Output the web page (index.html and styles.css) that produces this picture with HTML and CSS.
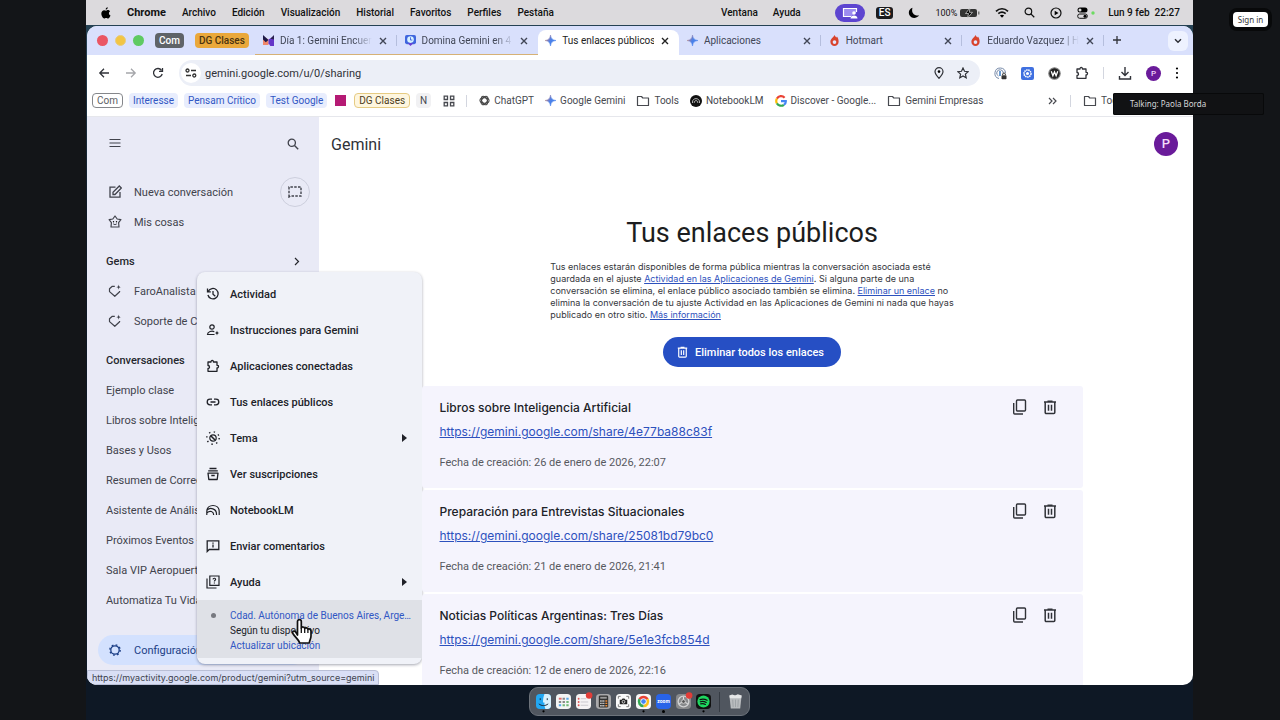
FILE: index.html
```
<!DOCTYPE html>
<html lang="es">
    <head>
        <meta charset="UTF-8" />
        <title>Tus enlaces públicos - Gemini</title>
        <link rel="stylesheet" href="styles.css">
    </head>
    <body>
        <!-- Icons shared by the whole page -->
        <svg class="sprite" aria-hidden="true">
            <symbol id="close" viewBox="0 0 10 10"><path d="M2 2l6 6M8 2l-6 6" stroke="currentColor" stroke-width="1.4" /></symbol>
            <linearGradient id="sparkFill" x1="0" y1="0.2" x2="1" y2="0.8">
                <stop offset="0" stop-color="#e8a04a" /><stop offset=".25" stop-color="#8f7fb0" /><stop offset=".5" stop-color="#4a80e8" /><stop offset="1" stop-color="#4a86f0" />
            </linearGradient>
            <symbol id="spark" viewBox="0 0 12 12"><path d="M6 0C6.6 4 8 5.4 12 6 8 6.6 6.6 8 6 12 5.4 8 4 6.6 0 6 4 5.4 5.4 4 6 0z" fill="url(#sparkFill)" stroke="url(#sparkFill)" stroke-width=".6" /></symbol>
            <symbol id="flame" viewBox="0 0 12 12"><path d="M6 0c.8 1.2 1.2 2 2 2.700 .4-.3.600-.7.700-1C10 3.300 10.500 5.200 10.500 7.300 10.500 10 8.500 12 6 12S1.500 10 1.500 7.300C1.500 5 3 3.700 4 2.700 5 1.700 5.700 1 6 0z" fill="#d8432c" /><circle cx="6" cy="7.700" r="2" fill="#e1e6fc" /></symbol>
            <symbol id="folder" viewBox="0 0 14 12"><path d="M1.500 10.500v-9h4l1.300 1.500h5.700v7.500z" fill="none" stroke="currentColor" stroke-width="1.200" stroke-linejoin="round" /></symbol>
            <symbol id="puzzle" viewBox="0 0 14 14"><path d="M2 3h3c-.3-2 2.800-2 2.500 0H11v3.300c2-.3 2 2.700 0 2.500V12.300H2V9.500c2 .1 2-3 0-3z" fill="none" stroke="currentColor" stroke-width="1.300" stroke-linejoin="round" /></symbol>
            <symbol id="search" viewBox="0 0 12 12"><circle cx="4.800" cy="4.800" r="3.600" fill="none" stroke="currentColor" stroke-width="1.300" /><path d="M7.500 7.500L11.200 11.200" stroke="currentColor" stroke-width="1.400" /></symbol>
            <symbol id="gem" viewBox="0 0 14 14"><path d="M6.800 2.300H4.300L1.500 4.800v2.800L6.800 12.300l4.800-4.500V7" fill="none" stroke="currentColor" stroke-width="1.200" stroke-linejoin="round" /><path d="M10.600.4c.3 1.900.8 2.400 2.700 2.700-1.900.3-2.400.8-2.700 2.700-.3-1.900-.8-2.400-2.700-2.700 1.900-.3 2.400-.8 2.700-2.700z" fill="currentColor" /></symbol>
            <symbol id="copy" viewBox="0 0 16 16"><rect x="4.500" y="1" width="9" height="11" rx="1" fill="none" stroke="currentColor" stroke-width="1.400" /><path d="M1.700 4v10a1 1 0 0 0 1 1H11" fill="none" stroke="currentColor" stroke-width="1.400" /></symbol>
            <symbol id="trash" viewBox="0 0 16 16"><path d="M2 3h12M5.500 2.200h5M3.200 3v10.500a1 1 0 0 0 1 1h7.600a1 1 0 0 0 1-1V3M6.500 5.700v6M9.500 5.700v6" fill="none" stroke="currentColor" stroke-width="1.500" /></symbol>
            <symbol id="arrow" viewBox="0 0 6 8"><path d="M1 0l5 4-5 4z" fill="currentColor" /></symbol>
        </svg>

        <div class="share">
            <!-- macOS menu bar -->
            <header class="menubar">
                <svg class="apple" viewBox="0 0 12 14"><path d="M8.100 0c.1 1.500-1.200 2.900-2.500 2.900C5.400 1.500 6.700.2 8.100 0zM8.300 3.500c.8 0 1.900.4 2.600 1.400-2.100 1.300-1.800 4.200.5 5.100-.6 1.600-1.700 3.500-2.900 3.500-.9 0-1.200-.6-2.300-.6s-1.500.6-2.300.6C2.200 13.500.4 10.500.4 7.700c0-2.600 1.600-4.100 3.300-4.100 1 0 1.800.7 2.500.7.600 0 1.300-.8 2.100-.8z" /></svg>
                <b>Chrome</b>
                <span>Archivo</span>
                <span>Edición</span>
                <span>Visualización</span>
                <span>Historial</span>
                <span>Favoritos</span>
                <span>Perfiles</span>
                <span>Pestaña</span>
                <div class="menubar-right">
                    <span>Ventana</span>
                    <span>Ayuda</span>
                    <span class="share-pill"><svg width="16" height="12" viewBox="0 0 16 12"><path d="M9 9.500H1.500v-8h13V5" fill="#9d8cf0" stroke="#fff" stroke-width="1.200" /><circle cx="12" cy="6" r="1.800" fill="#fff" /><path d="M8.500 11.500c0-4 7-4 7 0z" fill="#fff" /></svg></span>
                    <span class="lang">ES</span>
                    <svg width="12" height="12" viewBox="0 0 12 12"><path d="M4.500.8C1 2 0 5.500 1.500 8.300s6.300 4 9.700.2C6 9 3 5.500 4.500.8z" /></svg>
                    <span class="battery">100%
                        <svg width="20" height="10" viewBox="0 0 20 10"><rect y="1" width="17" height="8" rx="2" fill="#333" /><rect x="18" y="3.500" width="1.500" height="3" fill="#777" /><path d="M10 0L5.500 5.500h3L7.500 10 12.500 4.300h-3.200z" stroke="#ddd" stroke-width=".7" /></svg>
                    </span>
                    <svg width="14" height="11" viewBox="0 0 14 11"><path d="M1 4.300c3.500-3.400 8.500-3.400 12 0M3.300 6.700c2.200-2 5.200-2 7.400 0" fill="none" stroke="#111" stroke-width="1.700" /><path d="M7 10.700L4.900 8.500c1.200-1 3-1 4.200 0z" /></svg>
                    <svg width="11" height="11"><use href="#search" /></svg>
                    <svg width="12" height="12" viewBox="0 0 12 12"><circle cx="6" cy="6" r="5" fill="none" stroke="#111" stroke-width="1.200" /><path d="M4.700 3.700v4.600L8.500 6z" /></svg>
                    <svg class="controls" width="18" height="12" viewBox="0 0 18 12"><rect x=".5" y=".5" width="10" height="5" rx="2.500" /><circle cx="3" cy="3" r="1.500" fill="#ddd" /><rect x=".7" y="7" width="9.600" height="4.300" rx="2" fill="none" stroke="#111" /><circle cx="8" cy="9.200" r="1.500" /><circle cx="16" cy="6" r="1.700" fill="#6edb62" /></svg>
                    <span>Lun 9 feb &nbsp;22:27</span>
                </div>
            </header>

            <div class="window">
                <!-- Tab strip -->
                <nav class="tabs">
                    <div class="lights"><i class="red"></i><i class="yellow"></i><i class="green"></i></div>
                    <button class="group gray">Com</button>
                    <button class="group orange">DG Clases</button>
                    <div class="tab-list">
                        <div class="tab grouped">
                            <svg class="fav" viewBox="0 0 12 12"><path d="M0 1l6 4v6H0z" fill="#f0876a" /><path d="M0 0l6 5.500L3 8 0 5z" fill="#1d1b49" /><path d="M6 5l6-4v11H8L6 9z" fill="#6536c8" /><path d="M8 4l4-4v5z" fill="#2a214f" /></svg>
                            <span class="fade">Día 1: Gemini Encuentro</span><button aria-label="Cerrar"><svg><use href="#close" /></svg></button>
                        </div>
                        <div class="tab grouped">
                            <svg class="fav" viewBox="0 0 12 12"><rect width="12" height="10" rx="2" fill="#3f66de" /><circle cx="6" cy="5" r="3.600" fill="#d6f1ff" /><path d="M6 2.500V5.500h2" stroke="#3f66de" fill="none" /><path d="M3 9h6l-3 3z" fill="#6c3bd4" /></svg>
                            <span class="fade">Domina Gemini en 4 días</span><button aria-label="Cerrar"><svg><use href="#close" /></svg></button>
                        </div>
                        <div class="tab active"><svg class="fav"><use href="#spark" /></svg><span>Tus enlaces públicos</span><button aria-label="Cerrar"><svg><use href="#close" /></svg></button></div>
                        <div class="tab"><svg class="fav"><use href="#spark" /></svg><span>Aplicaciones</span><button aria-label="Cerrar"><svg><use href="#close" /></svg></button></div>
                        <div class="tab"><svg class="fav"><use href="#flame" /></svg><span>Hotmart</span><button aria-label="Cerrar"><svg><use href="#close" /></svg></button></div>
                        <div class="tab"><svg class="fav"><use href="#flame" /></svg><span class="fade">Eduardo Vazquez | Hotmart</span><button aria-label="Cerrar"><svg><use href="#close" /></svg></button></div>
                    </div>
                    <button class="new-tab" aria-label="Nueva pestaña"><svg width="10" height="10" viewBox="0 0 10 10"><path d="M5 1v8M1 5h8" stroke="currentColor" stroke-width="1.300" /></svg></button>
                    <button class="tab-menu" aria-label="Buscar pestañas"><svg width="8" height="6" viewBox="0 0 8 6"><path d="M1 1.300l3 3 3-3" fill="none" stroke="currentColor" stroke-width="1.500" /></svg></button>
                </nav>

                <!-- Toolbar -->
                <div class="toolbar">
                    <button aria-label="Atrás"><svg width="12" height="12" viewBox="0 0 12 12"><path d="M11 6H2M6 1.800L1.800 6 6 10.200" fill="none" stroke="currentColor" stroke-width="1.300" /></svg></button>
                    <button class="off" aria-label="Adelante"><svg width="12" height="12" viewBox="0 0 12 12"><path d="M1 6h9M6 1.800L10.200 6 6 10.200" fill="none" stroke="currentColor" stroke-width="1.300" /></svg></button>
                    <button aria-label="Recargar"><svg width="12" height="12" viewBox="0 0 12 12"><path d="M10.200 7A4.400 4.400 0 1 1 9.500 3.300M10.500 1v3.400H7" fill="none" stroke="currentColor" stroke-width="1.300" /></svg></button>
                    <div class="omnibox">
                        <span class="site"><svg width="12" height="10" viewBox="0 0 12 10"><g fill="none" stroke="#333" stroke-width="1.300"><circle cx="2.500" cy="2.500" r="1.500" /><path d="M6 2.500h5M1 7.500h5" /><circle cx="9.300" cy="7.500" r="1.500" /></g></svg></span>
                        <input type="text" aria-label="Dirección" value="gemini.google.com/u/0/sharing" />
                        <svg width="12" height="12" viewBox="0 0 12 12"><path d="M6 11.300C3.500 8.500 2 6.600 2 4.700a4 4 0 0 1 8 0c0 1.900-1.500 3.800-4 6.600z" fill="none" stroke="currentColor" stroke-width="1.200" /><circle cx="6" cy="4.600" r="1.300" /></svg>
                        <svg width="12" height="12" viewBox="0 0 12 12"><path d="M6 1l1.500 3.300 3.600.4-2.700 2.400.8 3.600L6 8.900l-3.200 1.800.8-3.600L.9 4.700l3.600-.4z" fill="none" stroke="currentColor" stroke-width="1.200" /></svg>
                    </div>
                    <svg width="13" height="13" viewBox="0 0 13 13"><g fill="none" stroke="#7689a8"><path d="M5 11.500A5.300 5.300 0 1 1 11.500 6" /><path d="M4.500 9A3.300 3.300 0 1 1 9.300 6" /></g><path d="M6 4v5" stroke="#3979c0" stroke-width="1.500" /><rect x="7.500" y="8.300" width="5" height="4" rx=".7" fill="#333" /><path d="M8.700 8V7c0-1.300 2.600-1.300 2.600 0v1" fill="none" stroke="#333" /></svg>
                    <svg width="13" height="13" viewBox="0 0 13 13"><rect width="13" height="13" rx="2" fill="#4070e0" /><circle cx="6.500" cy="6.500" r="3.500" fill="none" stroke="#fff" stroke-width="1.500" stroke-dasharray="1.500 .6" /><circle cx="6.500" cy="6.500" r="1.500" fill="#fff" /></svg>
                    <svg width="13" height="13" viewBox="0 0 12 12"><circle cx="6" cy="6" r="5.300" fill="#222" stroke="#888" /><path d="M3 4l1.500 4L6 4.500 7.500 8 9 4" fill="none" stroke="#fff" stroke-width="1.200" /></svg>
                    <svg width="14" height="14"><use href="#puzzle" /></svg>
                    <i class="sep"></i>
                    <svg width="14" height="13" viewBox="0 0 14 13"><path d="M7 0v8M3.500 5L7 8.500 10.500 5M1.500 9v3h11V9" fill="none" stroke="currentColor" stroke-width="1.400" /></svg>
                    <span class="avatar small">P</span>
                    <svg class="dots" width="4" height="12" viewBox="0 0 4 12"><circle cx="2" cy="1.500" r="1.100" /><circle cx="2" cy="6" r="1.100" /><circle cx="2" cy="10.500" r="1.100" /></svg>
                </div>

                <!-- Bookmarks -->
                <div class="bookmarks">
                    <button class="chip outline">Com</button>
                    <button class="chip blue">Interesse</button>
                    <button class="chip blue">Pensam Crítico</button>
                    <button class="chip blue">Test Google</button>
                    <button class="square" aria-label="Grupo"></button>
                    <button class="chip yellow">DG Clases</button>
                    <button class="chip light">N</button>
                    <svg class="apps" width="12" height="12" viewBox="0 0 12 12"><path d="M1.200 1.200h3.300v3.300H1.200zM7.500 1.200h3.300v3.300H7.500zM1.200 7.500h3.300v3.300H1.200zM7.500 7.500h3.300v3.300H7.500z" fill="none" stroke="currentColor" stroke-width="1.300" /></svg>
                    <i class="sep"></i>
                    <a href="#"><svg width="11" height="11" viewBox="0 0 12 12"><g fill="none" stroke="#444" stroke-width="1.100"><ellipse cx="6" cy="6" rx="5" ry="3" /><ellipse cx="6" cy="6" rx="5" ry="3" transform="rotate(60 6 6)" /><ellipse cx="6" cy="6" rx="5" ry="3" transform="rotate(120 6 6)" /></g></svg>ChatGPT</a>
                    <a href="#"><svg width="11" height="11"><use href="#spark" /></svg>Google Gemini</a>
                    <a href="#"><svg width="14" height="12"><use href="#folder" /></svg>Tools</a>
                    <a href="#"><svg width="12" height="12" viewBox="0 0 12 12"><circle cx="6" cy="6" r="6" fill="#111" /><path d="M2.500 8V7c0-4.500 7-4.500 7 0v1M4.300 8V7.500c0-2.500 3.400-2.500 3.400 0V8" fill="none" stroke="#ddd" stroke-width=".8" /></svg>NotebookLM</a>
                    <a href="#"><svg width="12" height="12" viewBox="0 0 12 12"><g fill="none" stroke-width="2.200"><path d="M9.600 2.700A4.800 4.800 0 0 0 1.900 3.600" stroke="#ea4335" /><path d="M1.900 3.600a4.800 4.800 0 0 0 0 4.800" stroke="#fbbc05" /><path d="M1.900 8.400a4.800 4.800 0 0 0 7 1.400" stroke="#34a853" /><path d="M8.900 9.800C10.200 9 10.900 7.600 10.800 6.100H6" stroke="#4285f4" /></g></svg>Discover - Google...</a>
                    <a href="#"><svg width="14" height="12"><use href="#folder" /></svg>Gemini Empresas</a>
                    <svg class="more" width="9" height="8" viewBox="0 0 9 8"><path d="M1 1l3 3-3 3M5 1l3 3-3 3" fill="none" stroke="currentColor" stroke-width="1.200" /></svg>
                    <i class="sep"></i>
                    <a class="last" href="#"><svg width="14" height="12"><use href="#folder" /></svg>Todos</a>
                </div>

                <div class="page">
                    <!-- Gemini side navigation -->
                    <aside class="sidebar">
                        <div class="side-top">
                            <svg width="12" height="10" viewBox="0 0 12 10"><path d="M.5 1.500h11M.5 5h11M.5 8.500h11" stroke="currentColor" stroke-width="1.200" /></svg>
                            <svg width="12" height="12"><use href="#search" /></svg>
                        </div>
                        <a class="row" href="#">
                            <svg viewBox="0 0 14 14"><path d="M7.500 2.200H2v10h10V7" fill="none" stroke="currentColor" stroke-width="1.300" /><path d="M5 9.500V7.300L11.300 1l2 2L7 9.500z" fill="none" stroke="currentColor" stroke-width="1.300" /></svg>
                            Nueva conversación
                            <span class="temp"><svg width="14" height="12" viewBox="0 0 14 12"><path d="M1 11V1h12v9H2.500z" fill="none" stroke="currentColor" stroke-width="1.400" stroke-dasharray="2.500 1.300" /></svg></span>
                        </a>
                        <a class="row" href="#">
                            <svg viewBox="0 0 14 14"><path d="M7 1l2.200 3 3.700.7-2.300 3 .4 4.300H3l.4-4.300-2.300-3L4.800 4z" fill="none" stroke="currentColor" stroke-width="1.200" stroke-linejoin="round" /><circle cx="5.500" cy="6.700" r=".7" /><circle cx="8.500" cy="6.700" r=".7" /><path d="M5.200 8.800c1 1 2.600 1 3.600 0" fill="none" stroke="currentColor" /></svg>
                            Mis cosas
                        </a>
                        <h2>Gems <svg width="6" height="9" viewBox="0 0 6 9"><path d="M1 1l3.500 3.500L1 8" fill="none" stroke="currentColor" stroke-width="1.200" /></svg></h2>
                        <a class="row" href="#"><svg><use href="#gem" /></svg>FaroAnalista</a>
                        <a class="row" href="#"><svg><use href="#gem" /></svg>Soporte de Clases</a>
                        <h2>Conversaciones</h2>
                        <a class="row" href="#">Ejemplo clase</a>
                        <a class="row" href="#">Libros sobre Inteligencia Artificial</a>
                        <a class="row" href="#">Bases y Usos</a>
                        <a class="row" href="#">Resumen de Correos</a>
                        <a class="row" href="#">Asistente de Análisis</a>
                        <a class="row" href="#">Próximos Eventos -</a>
                        <a class="row" href="#">Sala VIP Aeropuerto</a>
                        <a class="row" href="#">Automatiza Tu Vida</a>
                        <button class="settings"><svg width="14" height="14" viewBox="0 0 14 14"><circle cx="7" cy="7" r="4.200" fill="none" stroke="currentColor" stroke-width="1.300" /><circle cx="7" cy="7" r="5.200" fill="none" stroke="currentColor" stroke-width="1.300" stroke-dasharray="1.800 2.284" /></svg>Configuración y ayuda</button>

                        <!-- Settings menu -->
                        <div class="menu">
                            <button><svg viewBox="0 0 14 14"><path d="M2.300 4.300A5.200 5.200 0 1 1 1.900 8M1.500 1.500v3.300h3.300M7 4v3.300l2.300 2" fill="none" stroke="currentColor" stroke-width="1.300" /></svg>Actividad</button>
                            <button><svg viewBox="0 0 14 14"><circle cx="6" cy="4" r="2.200" fill="none" stroke="currentColor" stroke-width="1.200" /><path d="M8.500 11.500H1.500C1.500 8.500 6 7.500 8.300 8.700" fill="none" stroke="currentColor" stroke-width="1.200" /><path d="M11 7.500c.3 1.600.8 2.200 2.500 2.500-1.700.3-2.200.9-2.500 2.500-.3-1.600-.8-2.200-2.500-2.500 1.700-.3 2.200-.9 2.500-2.500z" fill="currentColor" /></svg>Instrucciones para Gemini</button>
                            <button><svg><use href="#puzzle" /></svg>Aplicaciones conectadas</button>
                            <button><svg viewBox="0 0 14 14"><path d="M6 4.200H4a2.800 2.800 0 0 0 0 5.600h2M8 4.200h2a2.800 2.800 0 0 1 0 5.600H8M4.500 7h5" fill="none" stroke="currentColor" stroke-width="1.300" /></svg>Tus enlaces públicos</button>
                            <button><svg viewBox="0 0 14 14"><circle cx="7" cy="7" r="3.200" fill="none" stroke="currentColor" stroke-width="1.200" /><path d="M4.700 4.700l4.600 4.600" stroke="currentColor" stroke-width="1.600" /><circle cx="7" cy="7" r="6.200" fill="none" stroke="currentColor" stroke-width="1.400" stroke-dasharray="1.400 3.469" /></svg>Tema<svg class="arrow"><use href="#arrow" /></svg></button>
                            <button><svg viewBox="0 0 14 14"><path d="M3.500 1.500h7M2.200 3.800h9.600M2 6.200h10l-.8 6.300H2.800zM5.300 8.500h3.400" fill="none" stroke="currentColor" stroke-width="1.300" stroke-linejoin="round" /></svg>Ver suscripciones</button>
                            <button><svg viewBox="0 0 14 14"><path d="M.8 12V8.500C.8.500 13.200.5 13.200 8.500V12M1 7.200C4 4 10.500 5.500 10.500 11v1M1 9.800C4 7 7.700 8.500 7.700 12" fill="none" stroke="currentColor" stroke-width="1.200" /></svg>NotebookLM</button>
                            <button><svg viewBox="0 0 14 14"><path d="M1.200 12.500V1.800h11.600v8.700H3.200zM7 5.500V8.500M7 3.500v1.200" fill="none" stroke="currentColor" stroke-width="1.300" /></svg>Enviar comentarios</button>
                            <button><svg viewBox="0 0 14 14"><path d="M3.800 1h9.200v9.300H3.800zM1 3.500V13h9.500M7 4.300c.2-1.500 2.800-1.300 2.600.2-.1.800-1.200.9-1.200 2M8.400 7.500v1.100" fill="none" stroke="currentColor" stroke-width="1.200" /></svg>Ayuda<svg class="arrow"><use href="#arrow" /></svg></button>
                            <div class="location">
                                <a href="#">Cdad. Autónoma de Buenos Aires, Argentina</a>
                                <span>Según tu dispositivo</span>
                                <a href="#">Actualizar ubicación</a>
                                <svg class="pointer" width="22" height="28" viewBox="0 0 22 28"><path d="M6.500 17V3.500c0-2.600 3.800-2.600 3.800 0V10c.3-1.400 3-1.400 3.400.4.700-1 3-.8 3.200 1 .9-.8 3.100-.5 3.100 1.800V18c0 3-1.500 4-1.700 7H8.700C8 22 4 19 2 15.700c-1.300-2.200 1.200-3.500 2.700-1.700z" fill="#fff" stroke="#111" stroke-width="1.700" stroke-linejoin="round" /><path d="M10.300 10v5M13.700 11v4M16.900 12v3" stroke="#111" stroke-width="1.300" /></svg>
                            </div>
                        </div>
                    </aside>

                    <main>
                        <div class="brand">Gemini<span class="avatar">P</span></div>
                        <section class="links">
                            <h1>Tus enlaces públicos</h1>
                            <p>
                                Tus enlaces estarán disponibles de forma pública mientras la conversación asociada esté<br>
                                guardada en el ajuste <a href="#">Actividad en las Aplicaciones de Gemini</a>. Si alguna parte de una<br>
                                conversación se elimina, el enlace público asociado también se elimina. <a href="#">Eliminar un enlace</a> no<br>
                                elimina la conversación de tu ajuste Actividad en las Aplicaciones de Gemini ni nada que hayas<br>
                                publicado en otro sitio. <a href="#">Más información</a>
                            </p>
                            <button class="delete-all"><svg width="11" height="12" viewBox="1 1 14 14"><use href="#trash" width="16" height="16" /></svg>Eliminar todos los enlaces</button>
                            <article>
                                <div>
                                    <h3>Libros sobre Inteligencia Artificial</h3>
                                    <a href="#">https://gemini.google.com/share/4e77ba88c83f</a>
                                    <small>Fecha de creación: 26 de enero de 2026, 22:07</small>
                                </div>
                                <button aria-label="Copiar"><svg><use href="#copy" /></svg></button>
                                <button aria-label="Eliminar"><svg><use href="#trash" /></svg></button>
                            </article>
                            <article>
                                <div>
                                    <h3>Preparación para Entrevistas Situacionales</h3>
                                    <a href="#">https://gemini.google.com/share/25081bd79bc0</a>
                                    <small>Fecha de creación: 21 de enero de 2026, 21:41</small>
                                </div>
                                <button aria-label="Copiar"><svg><use href="#copy" /></svg></button>
                                <button aria-label="Eliminar"><svg><use href="#trash" /></svg></button>
                            </article>
                            <article>
                                <div>
                                    <h3>Noticias Políticas Argentinas: Tres Días</h3>
                                    <a href="#">https://gemini.google.com/share/5e1e3fcb854d</a>
                                    <small>Fecha de creación: 12 de enero de 2026, 22:16</small>
                                </div>
                                <button aria-label="Copiar"><svg><use href="#copy" /></svg></button>
                                <button aria-label="Eliminar"><svg><use href="#trash" /></svg></button>
                            </article>
                        </section>
                    </main>
                    <div class="status">https://myactivity.google.com/product/gemini?utm_source=gemini</div>
                </div>
            </div>

            <!-- Dock -->
            <footer>
                <div class="dock">
                    <svg viewBox="0 0 16 16"><rect width="16" height="16" rx="4" fill="#22a7f2" /><path d="M9 0h3a4 4 0 0 1 4 4v8a4 4 0 0 1-4 4h-2C9 13 9 11 9 9H7.500C7.500 5 8 3 9 0z" fill="#d9f1fd" /><path d="M4.500 4.500v2M12 4.500v2M3 10.500c3 2.500 7 2.500 10 0" fill="none" stroke="#123" /><circle cx="8" cy="18.500" r="1.200" /></svg>
                    <svg viewBox="0 0 16 16"><rect width="16" height="16" rx="4" fill="#f4f5f4" /><path d="M3 5h3" stroke="#e26a6a" stroke-width="2" /><path d="M7 5h2.500M3 8.500h2.500M7 8.500h2.500" stroke="#888" stroke-width="2" /><path d="M11 5h2.500M3 12h2.500" stroke="#56a7ea" stroke-width="2" /><path d="M11 8.500h2.500M7 12h2.500M11 12h2.500" stroke="#72b878" stroke-width="2" /></svg>
                    <svg viewBox="0 0 16 16"><rect width="16" height="16" rx="4" fill="#f5f3f4" /><path d="M5 5h6M5 8.500h8M5 12h8" stroke="#c9c6cc" /><circle cx="2.800" cy="5" r="1" fill="#e05656" /><circle cx="2.800" cy="8.500" r="1" fill="#e05656" /><circle cx="2.800" cy="12" r="1" fill="#e05656" /><circle cx="14" cy="1.500" r="3.500" fill="#e23d38" /></svg>
                    <svg viewBox="0 0 16 16"><rect width="16" height="16" rx="4" fill="#a9a9ab" /><rect x="3" y="1.500" width="10" height="13" rx="1.500" fill="#333" /><path d="M4.500 4h7" stroke="#999" stroke-width="2" /><path d="M4.500 7.500h5M4.500 10h5M4.500 12.500h5" stroke="#ddd" stroke-width="1.500" stroke-dasharray="1.500 .8" /><path d="M10 7.500h2M10 10h2M10 12.500h2" stroke="#ef8b35" stroke-width="1.500" /></svg>
                    <svg viewBox="0 0 16 16"><rect width="16" height="16" rx="4" fill="#fafafa" /><path d="M2.500 5V2.500H5M11 2.500h2.500V5M13.500 11v2.500H11M5 13.500H2.500V11" fill="none" stroke="#777" /><path d="M4 6h2l1-1.300h2L10 6h2v5H4z" fill="#222" /><circle cx="8" cy="8.300" r="1.500" fill="none" stroke="#fff" stroke-width=".8" /></svg>
                    <svg viewBox="0 0 16 16"><rect width="16" height="16" rx="4" fill="#f6f6f6" /><path d="M8 8L2.600 4.900A6.200 6.200 0 0 1 13.400 4.900z" fill="#e84235" /><path d="M8 8l5.400-3.100A6.200 6.200 0 0 1 8 14.200z" fill="#fbc116" /><path d="M8 8v6.200A6.200 6.200 0 0 1 2.600 4.900z" fill="#34a853" /><circle cx="8" cy="8" r="3" fill="#4285f4" stroke="#fff" /><circle cx="8" cy="18.500" r="1.200" /></svg>
                    <span class="zoom">zoom</span>
                    <svg viewBox="0 0 16 16"><rect width="16" height="16" rx="4" fill="#87898b" /><circle cx="8" cy="8" r="5.700" fill="none" stroke="#d0d1d2" stroke-width="1.500" /><path d="M8 8V3M8 8l4.500 2.500M8 8l-4.500 2.500" stroke="#ddd" stroke-width="1.200" /><circle cx="8" cy="8" r="2" fill="#555" stroke="#ccc" /><circle cx="14" cy="1.500" r="3.500" fill="#e23d38" /></svg>
                    <svg viewBox="0 0 16 16"><rect width="16" height="16" rx="4" fill="#111" /><circle cx="8" cy="8" r="6.500" fill="#1ed760" /><path d="M4.300 6c2.800-.8 5.300-.5 7.500.7M4.600 8.300c2.300-.6 4.500-.3 6.300.7M5 10.500c1.800-.5 3.600-.2 5 .6" fill="none" stroke="#111" stroke-width="1.300" stroke-linecap="round" /><circle cx="8" cy="18.500" r="1.200" /></svg>
                    <i></i>
                    <svg viewBox="0 0 16 16"><path d="M1.500 1.500h13L13 15.500H3z" fill="#b9bcbf" /><path d="M1.500 1.500l3-1 3 1 3-1.200 4 1.200-.4 3H2z" fill="#e4e6e7" /><path d="M5 6l.5 8M8 6v8M11 6l-.5 8" stroke="#94999e" stroke-width=".8" /></svg>
                </div>
            </footer>
        </div>

        <!-- Meeting overlays -->
        <button class="sign-in">Sign in</button>
        <div class="talking">Talking: Paola Borda</div>
    </body>
</html>
```
FILE: styles.css
```
* {
    box-sizing: border-box;
}
body {
    margin: 0;
    height: 100vh;
    padding: 0 87px 0 86px;
    position: relative;
    overflow: hidden;
    background: #131518;
    color: #303238;
    font-family: Roboto, "Liberation Sans", sans-serif;
    font-size: 10px;
}
button {
    padding: 0;
    border: none;
    background: none;
    color: inherit;
    font: inherit;
}
a {
    color: inherit;
    text-decoration: none;
}
svg {
    flex: none;
}
h1,
h2,
h3,
p {
    margin: 0;
    font-weight: 400;
}
.sprite {
    position: absolute;
    width: 0;
    height: 0;
}

/* Shared desktop */
.share {
    height: 100%;
    display: flex;
    flex-direction: column;
    background: linear-gradient(#28475a, #0e1824 30%, #0e1825);
}
.menubar {
    height: 25px;
    padding: 0 13px 0 15px;
    display: flex;
    align-items: center;
    gap: 16px;
    background: #dcdadd;
    color: #111;
    font-weight: 500;
    white-space: nowrap;
}
.menubar b {
    font-size: 11px;
}
.apple {
    width: 10px;
    height: 12px;
}
.menubar-right {
    margin-left: auto;
    display: flex;
    align-items: center;
    gap: 15px;
}
.share-pill {
    width: 30px;
    height: 18px;
    margin: 0 -4px 0 19px;
    display: flex;
    align-items: center;
    justify-content: center;
    border-radius: 9px;
    background: #5d45d0;
}
.lang {
    padding: 0 3px;
    border-radius: 3px;
    background: #1b1b1d;
    color: #fff;
    line-height: 12px;
}
.battery {
    display: flex;
    align-items: center;
    gap: 3px;
    font-size: 9px;
    font-weight: 400;
}
.controls {
    margin-right: -2px;
}

/* Browser window */
.window {
    flex: 1;
    min-height: 0;
    display: flex;
    flex-direction: column;
    margin: 1px 0 0 1px;
    border-radius: 10px;
    overflow: hidden;
    background: #fff;
}
.tabs {
    height: 29px;
    flex: none;
    display: flex;
    align-items: center;
    padding: 0 5px 0 10px;
    background: #d9e0fc;
}
.lights {
    display: flex;
    gap: 7px;
    margin-right: 11px;
}
.lights i {
    width: 11px;
    height: 11px;
    border-radius: 50%;
}
.lights .red {
    background: #ea5664;
}
.lights .yellow {
    background: #f2c544;
}
.lights .green {
    background: #5fca62;
}
.group {
    height: 15px;
    padding: 0 4px;
    border-radius: 4px;
    font-weight: 500;
    white-space: nowrap;
}
.gray {
    background: #5f6368;
    color: #fff;
    margin-right: 11px;
}
.orange {
    background: #eaa83b;
    color: #4c3410;
}
.tab-list {
    flex: 1;
    min-width: 0;
    align-self: stretch;
    display: flex;
    margin-left: 6px;
}
.tab {
    flex: 1;
    min-width: 0;
    display: flex;
    align-items: center;
    gap: 6px;
    padding: 0 9px 0 8px;
    color: #414656;
    background: linear-gradient(#b5bedd, #b5bedd) right center / 1px 11px no-repeat;
}
.tab span {
    flex: 1;
    overflow: hidden;
    white-space: nowrap;
}
.fade {
    mask-image: linear-gradient(to right, #000 80%, transparent);
}
.fav {
    width: 11px;
    height: 11px;
}
.tab button,
.tab button svg {
    display: block;
    width: 10px;
    height: 10px;
}
.grouped {
    border-bottom: 1px solid #d6b176;
    padding-top: 1px;
}
.grouped + .grouped {
    background: none;
}
.active {
    margin-top: 4px;
    padding: 0 9px 4px 7px;
    border-radius: 8px 8px 0 0;
    background: #fff;
    color: #222;
}
.new-tab {
    margin: 0 46px 0 8px;
}
.tab-menu {
    width: 20px;
    height: 20px;
    border-radius: 6px;
    background: #eef2ff;
}
.toolbar {
    height: 36px;
    flex: none;
    display: flex;
    align-items: center;
    gap: 14px;
    padding: 0 14px 0 11px;
}
.toolbar button,
.toolbar svg {
    display: block;
}
.toolbar button {
    margin-right: 1px;
}
.off {
    color: #a5a6aa;
}
.omnibox {
    flex: 1;
    height: 26px;
    padding: 0 11px 0 2px;
    display: flex;
    align-items: center;
    gap: 12px;
    border-radius: 13px;
    background: #eceff7;
}
.site {
    width: 20px;
    height: 20px;
    margin-right: -8px;
    display: flex;
    align-items: center;
    justify-content: center;
    border-radius: 50%;
    background: #fff;
}
.omnibox input {
    flex: 1;
    min-width: 0;
    padding: 0;
    border: none;
    outline: none;
    background: none;
    color: #303238;
    font: 11px Roboto, "Liberation Sans", sans-serif;
}
.sep {
    width: 1px;
    height: 12px;
    background: #d3d6df;
}
.avatar {
    width: 24px;
    height: 24px;
    border-radius: 50%;
    background: #6a1b9a;
    color: #f3dcfa;
    font-size: 13px;
    line-height: 24px;
    font-weight: 500;
    text-align: center;
}
.small {
    width: 15px;
    height: 15px;
    font-size: 8px;
    line-height: 15px;
}
.bookmarks {
    height: 26px;
    flex: none;
    display: flex;
    align-items: center;
    padding: 0 0 6px 5px;
    border-bottom: 1px solid #e6e7ec;
    color: #47494f;
    white-space: nowrap;
    overflow: hidden;
}
.bookmarks a {
    display: flex;
    align-items: center;
    gap: 4px;
    margin-right: 11px;
}
.chip {
    height: 15px;
    margin-right: 6px;
    padding: 0 4px;
    border-radius: 4px;
}
.outline {
    border: 1px solid #85878b;
    color: #5c5e62;
}
.blue {
    background: #e8edfd;
    color: #3157c4;
}
.square {
    width: 11px;
    height: 11px;
    margin: 0 8px 0 2px;
    background: #b51a74;
}
.yellow {
    border: 1px solid #e6cb82;
    background: #fef6df;
    color: #4c3d1d;
}
.light {
    background: #f1f1f3;
}
.apps {
    margin: 0 11px 0 6px;
}
.apps + .sep {
    margin-right: 12px;
}
.more {
    margin: 0 13px 0 auto;
}
.more + .sep {
    margin-right: 12px;
}
.bookmarks .last {
    width: 110px;
    margin-right: 0;
}

/* Gemini */
.page {
    flex: 1;
    min-height: 0;
    display: flex;
    position: relative;
}
.sidebar {
    width: 232px;
    position: relative;
    display: flex;
    flex-direction: column;
    flex: none;
    background: #e9eaf6;
    color: #41434c;
    font-size: 11px;
}
.side-top {
    height: 60px;
    padding: 21px 20px 0 22px;
    display: flex;
    align-items: flex-start;
    justify-content: space-between;
}
.row {
    height: 30px;
    flex: none;
    padding: 0 9px 0 19px;
    display: flex;
    align-items: center;
    white-space: nowrap;
}
.row > svg {
    width: 14px;
    height: 14px;
    margin: 0 12px 0 2px;
}
.temp {
    width: 30px;
    height: 30px;
    margin-left: auto;
    display: flex;
    align-items: center;
    justify-content: center;
    border: 1px solid #cdcfdd;
    border-radius: 50%;
}
.sidebar h2 {
    height: 30px;
    flex: none;
    margin-top: 9px;
    padding: 0 19px;
    display: flex;
    align-items: center;
    justify-content: space-between;
    color: #25272d;
    font-size: 11px;
    font-weight: 500;
}
.settings {
    height: 30px;
    margin: auto 11px 20px 11px;
    padding-left: 10px;
    display: flex;
    align-items: center;
    gap: 12px;
    border-radius: 15px;
    background: #d3e1fe;
    color: #1c3f86;
    white-space: nowrap;
    overflow: hidden;
}
.menu {
    position: absolute;
    left: 110px;
    bottom: 21px;
    width: 225px;
    padding: 4px 0 6px;
    border-radius: 8px;
    background: #f0f2f8;
    box-shadow: 0 1px 3px rgba(30, 35, 60, 0.4);
    color: #202228;
    font-weight: 500;
}
.menu button {
    width: 100%;
    height: 36px;
    padding: 0 15px 0 9px;
    display: flex;
    align-items: center;
}
.menu svg {
    width: 14px;
    height: 14px;
    margin-right: 10px;
}
.menu .arrow {
    width: 6px;
    height: 8px;
    margin: 0 0 0 auto;
}
.location {
    position: relative;
    height: 58px;
    padding: 8px 8px 0 33px;
    display: flex;
    flex-direction: column;
    background: #dfe1e7;
    font-size: 10px;
    font-weight: 400;
    line-height: 15px;
}
.location::before {
    content: "";
    position: absolute;
    left: 14px;
    top: 13px;
    width: 5px;
    height: 5px;
    border-radius: 50%;
    background: #777980;
}
.location a {
    overflow: hidden;
    color: #3157c4;
    text-overflow: ellipsis;
    white-space: nowrap;
}
.location .pointer {
    position: absolute;
    left: 94px;
    top: 18px;
    width: 22px;
    height: 28px;
    margin: 0;
}
main {
    flex: 1;
    min-width: 0;
    overflow: hidden;
}
.brand {
    height: 54px;
    padding: 0 15px 0 12px;
    display: flex;
    align-items: center;
    justify-content: space-between;
    font-size: 16px;
}
.links {
    max-width: 661px;
    margin: 0 auto;
    position: relative;
    right: 4px;
    display: flex;
    flex-direction: column;
    align-items: center;
}
h1 {
    margin-top: 44px;
    color: #1c1d20;
    font-size: 27px;
    line-height: 36px;
}
.links p {
    margin: 10px 0 16px;
    color: #34363b;
    font-family: Inter, "Liberation Sans", sans-serif;
    font-size: 9px;
    line-height: 12px;
}
.links p a,
article a {
    color: #2d51bd;
    text-decoration: underline;
}
.delete-all {
    height: 30px;
    margin-bottom: 19px;
    padding: 0 17px 0 14px;
    display: flex;
    align-items: center;
    gap: 7px;
    border-radius: 15px;
    background: #264fc4;
    color: #fff;
    font-size: 11px;
    font-weight: 500;
}
article {
    align-self: stretch;
    height: 102px;
    margin-bottom: 2px;
    padding: 13px 25px 0 18px;
    display: flex;
    align-items: flex-start;
    gap: 14px;
    border-radius: 3px;
    background: #f5f4fd;
}
article div {
    flex: 1;
    display: flex;
    flex-direction: column;
    align-items: flex-start;
}
article h3,
article a {
    font-family: Inter, "Liberation Sans", sans-serif;
    font-size: 12px;
    line-height: 18px;
}
article h3 {
    color: #202228;
    font-weight: 500;
}
article a {
    margin: 6px 0 14px;
}
article small {
    color: #57595f;
    font-size: 11px;
    line-height: 16px;
}
article button,
article svg {
    display: block;
    width: 16px;
    height: 16px;
}
.status {
    position: absolute;
    left: 0;
    bottom: 0;
    padding: 0 4px;
    border: 1px solid #b9bfd6;
    border-radius: 0 4px 0 0;
    background: #d9dff5;
    color: #40434e;
    font-family: Inter, "Liberation Sans", sans-serif;
    font-size: 9px;
    line-height: 13px;
}

/* Dock */
footer {
    height: 35px;
    flex: none;
    display: flex;
    justify-content: center;
    align-items: flex-start;
    padding-top: 2px;
}
.dock {
    height: 29px;
    padding: 0 6px;
    display: flex;
    align-items: center;
    gap: 5px;
    border: 1px solid #6d737b;
    border-radius: 9px;
    background: #50565f;
}
.dock svg,
.zoom {
    width: 15px;
    height: 15px;
    overflow: visible;
}
.dock i {
    width: 1px;
    height: 20px;
    margin: 0 3px;
    background: #353b43;
}
.zoom {
    position: relative;
    border-radius: 4px;
    background: #2863e8;
    color: #fff;
    font-size: 5px;
    font-weight: 700;
    line-height: 15px;
    text-align: center;
}
.zoom::after {
    content: "";
    position: absolute;
    left: 6px;
    bottom: -4px;
    width: 3px;
    height: 3px;
    border-radius: 50%;
    background: #000;
}

/* Meeting overlays */
.sign-in {
    position: absolute;
    top: 12px;
    right: 12px;
    width: 35px;
    height: 15px;
    border-radius: 4px;
    background: #fff;
    box-shadow: 0 0 0 4px #08090a;
    color: #333;
    font: 8px "Noto Sans", sans-serif;
}
.talking {
    position: absolute;
    top: 93px;
    right: 16px;
    width: 151px;
    padding-left: 17px;
    border-radius: 2px;
    background: #111214;
    box-shadow: inset 0 0 0 1px #08090a;
    color: #d6d7d9;
    font: 8px/22px "Noto Sans", sans-serif;
}
```
